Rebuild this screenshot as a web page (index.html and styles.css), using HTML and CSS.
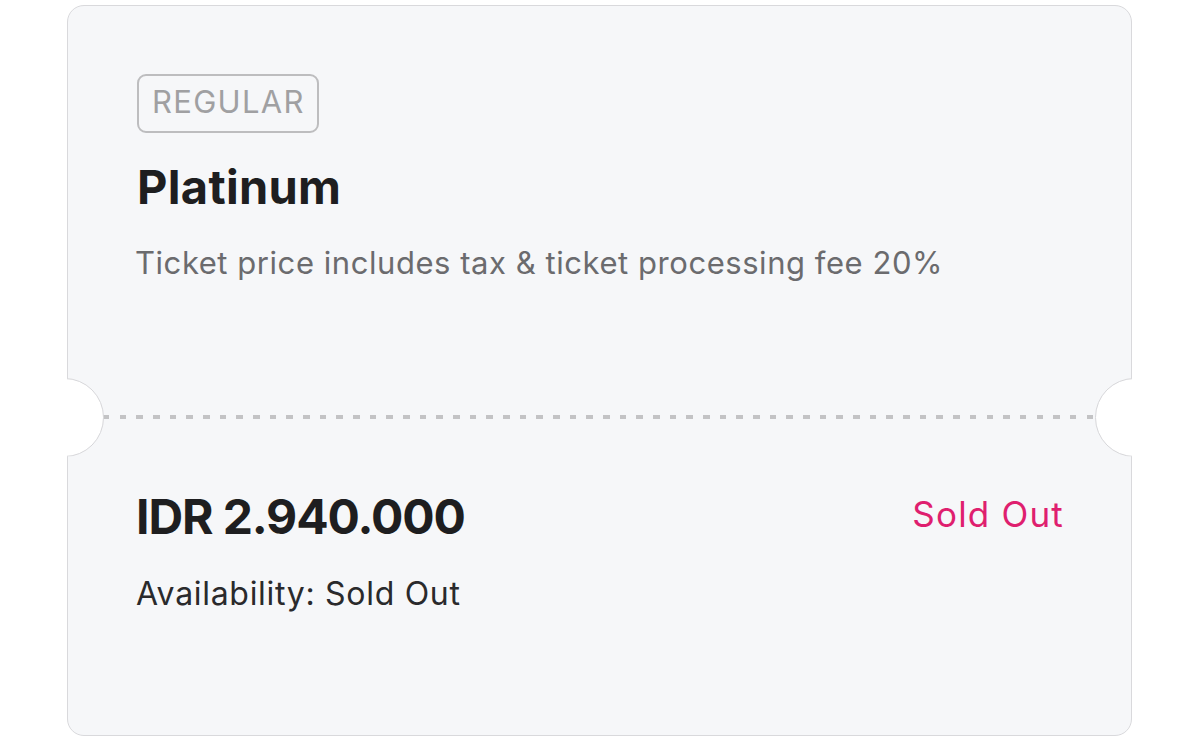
FILE: index.html
```html
<!DOCTYPE html>
<html lang="en">
<head>
<meta charset="utf-8">
<title>Ticket</title>
<link rel="stylesheet" href="styles.css">
</head>
<body>
<div class="page">
  <div class="ticket">
    <div class="ticket-top">
      <span class="badge">REGULAR</span>
      <h1 class="title">Platinum</h1>
      <p class="desc">Ticket price includes tax &amp; ticket processing fee 20%</p>
    </div>
    <div class="divider">
      <span class="notch notch-left"></span>
      <span class="dash"></span>
      <span class="notch notch-right"></span>
    </div>
    <div class="ticket-bottom">
      <div class="price-row">
        <div class="price">IDR 2.940.000</div>
        <div class="status">Sold Out</div>
      </div>
      <div class="availability">Availability: Sold Out</div>
    </div>
  </div>
</div>
</body>
</html>
```

FILE: styles.css
```css
* { box-sizing: border-box; }
html, body {
  margin: 0;
  padding: 0;
  background: #ffffff;
  font-family: Inter, "Noto Sans", "Liberation Sans", sans-serif;
}
.page {
  padding: 5px 0 0 67px;
}
.ticket {
  width: 1065px;
  height: 731px;
  background: #f6f7f9;
  border: 1px solid #d9d9dc;
  border-radius: 17px;
  display: flex;
  flex-direction: column;
}
.ticket-top {
  height: 409px;
  padding: 68px 70px 0 69px;
  display: flex;
  flex-direction: column;
  align-items: flex-start;
}
.badge {
  display: inline-block;
  border: 2px solid #bdbdbf;
  border-radius: 9px;
  padding: 0 12px 4px 13px;
  height: 59px;
  font-size: 31px;
  line-height: 51px;
  color: #a0a0a2;
  letter-spacing: 1.3px;
}
.title {
  margin: 26px 0 0 0;
  font-size: 47px;
  line-height: 56px;
  font-weight: 700;
  color: #1e1e20;
  letter-spacing: 0.3px;
}
.desc {
  margin: 28px 0 0 -2px;
  font-size: 31px;
  line-height: 40px;
  color: #6b6b6e;
  letter-spacing: 0.55px;
}
.divider {
  position: relative;
  height: 4px;
  display: flex;
  padding: 0 34px 0 35px;
}
.dash {
  flex: 1;
  height: 4px;
  background: repeating-linear-gradient(to right, #c3c3c5 0, #c3c3c5 6.5px, transparent 6.5px, transparent 16.67px);
}
.notch {
  position: absolute;
  top: -37.5px;
  width: 79px;
  height: 79px;
  border-radius: 50%;
  background: #ffffff;
  border: 1px solid #d6d6d9;
}
.notch-left {
  left: -43px;
  clip-path: inset(0 0 0 42px);
}
.notch-right {
  right: -43px;
  clip-path: inset(0 42px 0 0);
}
.ticket-bottom {
  flex: 1;
  padding: 69px 68px 0 68px;
}
.price-row {
  display: flex;
  justify-content: space-between;
  align-items: flex-start;
}
.price {
  font-size: 48px;
  line-height: 58px;
  font-weight: 700;
  color: #1e1e20;
  letter-spacing: -1.1px;
}
.status {
  font-size: 35px;
  line-height: 52px;
  color: #df1f6f;
  letter-spacing: 1.2px;
  margin-right: -1px;
}
.availability {
  margin-top: 28px;
  font-size: 32px;
  line-height: 40px;
  color: #2a2a2c;
  letter-spacing: 0.7px;
}
```
